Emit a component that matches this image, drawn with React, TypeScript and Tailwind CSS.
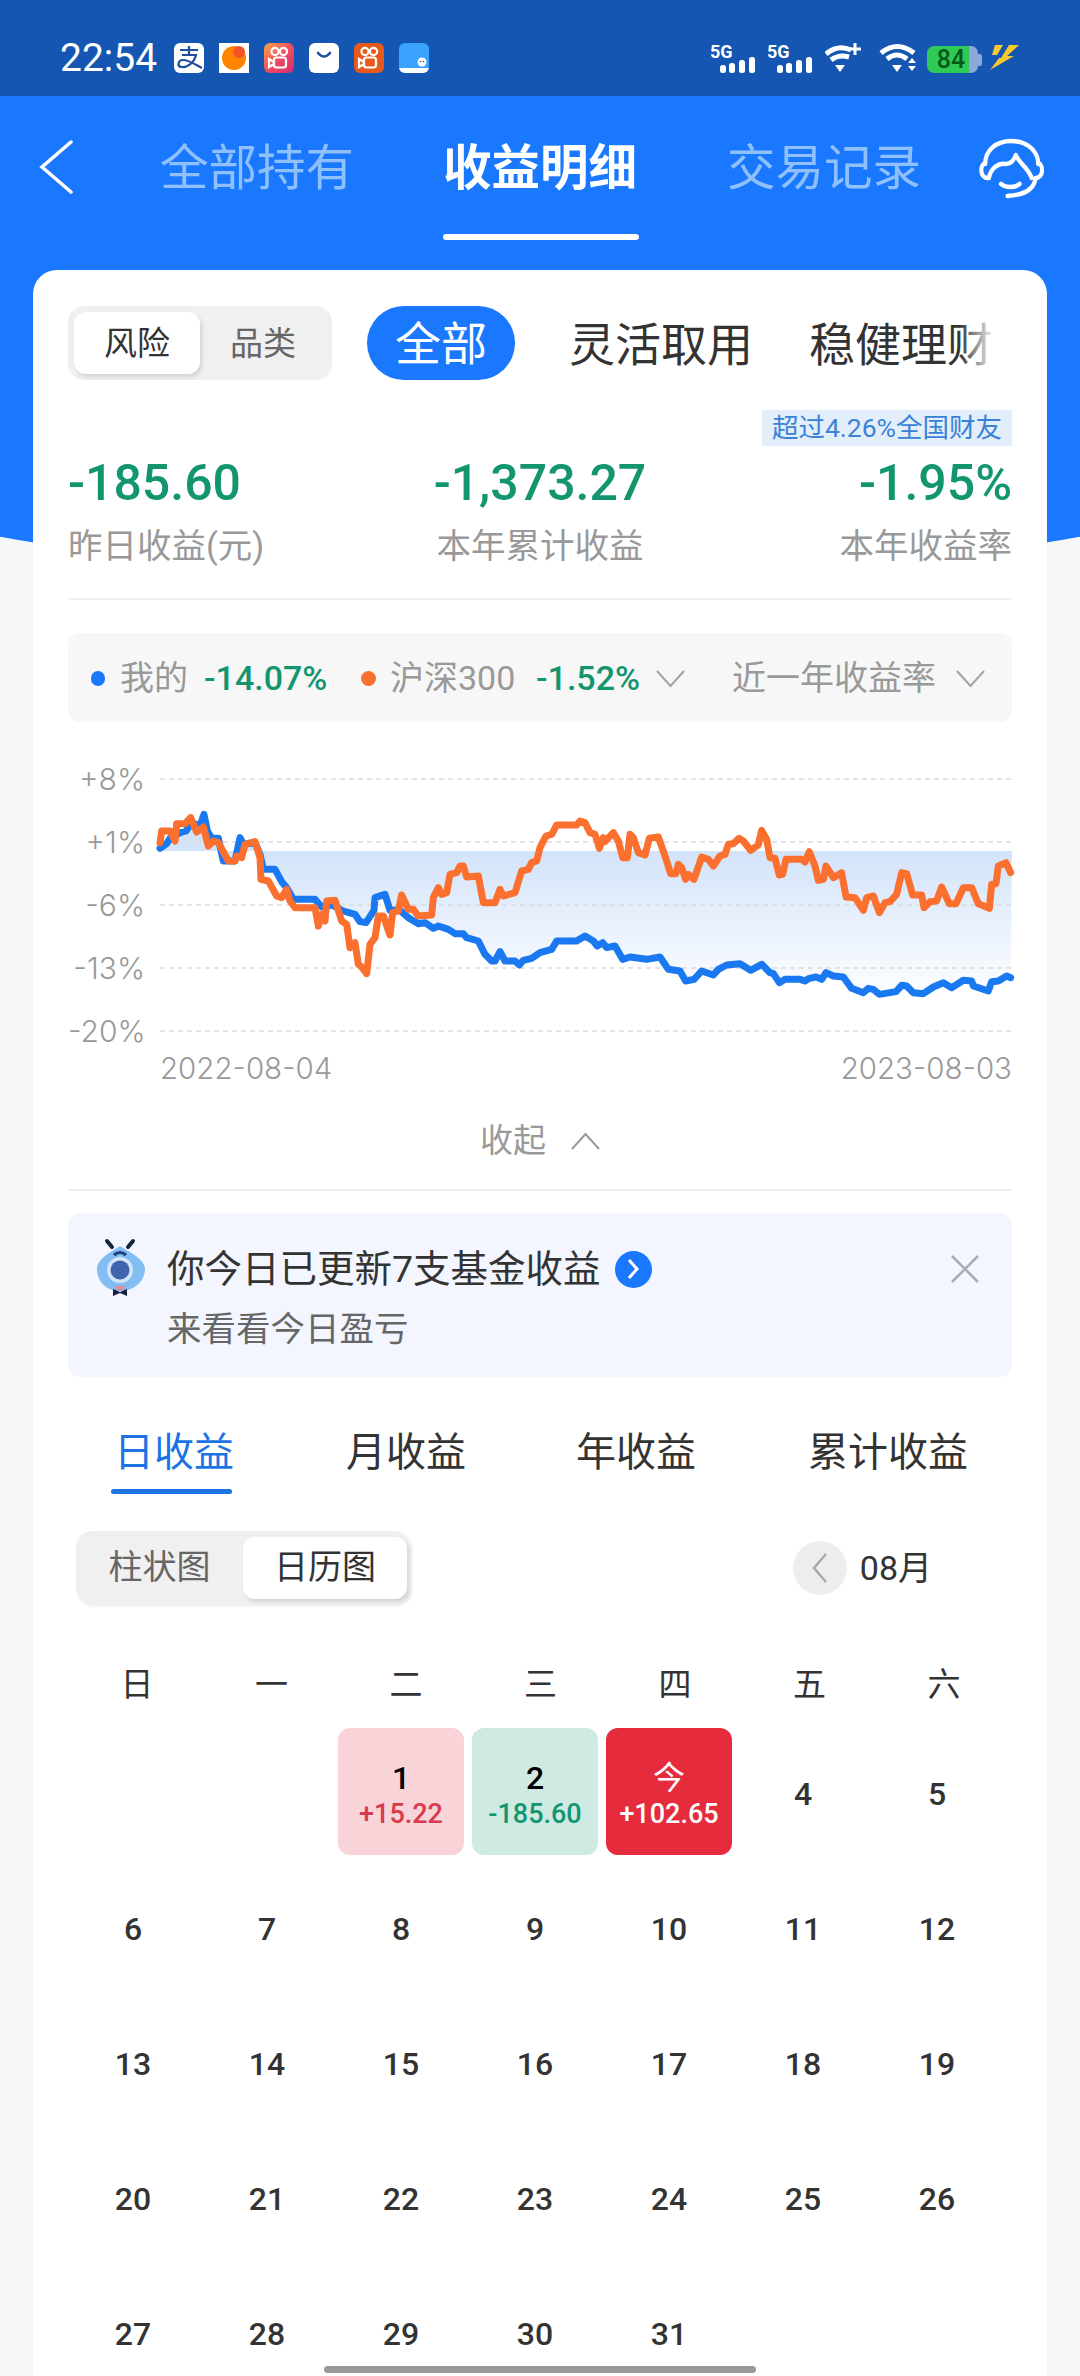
import React from 'react';

type Pt = [number, number];

const orangeA: Pt[] = [[300,275],[305,240],[330,240],[345,270],[350,218],[375,218],[392,200],[410,243],[430,228],[445,285],[460,270],[475,275],[505,330],[525,330],[530,315],[545,320],[555,280],[585,272],[600,320],[603,385],[625,390],[650,435],[665,440],[680,415],[690,450],[705,470],[765,470],[775,525],[785,490],[795,510],[800,450],[825,448],[845,510],[860,520],[870,590],[885,575],[895,640],[905,648],[920,668],[930,580],[945,560],[955,495],[970,495],[990,552],[998,485],[1015,480],[1025,432],[1045,475],[1060,475],[1075,495],[1115,492],[1120,440],[1135,410],[1145,430],[1160,425],[1170,370],[1190,365],[1200,345],[1210,345],[1220,378],[1255,375],[1270,455],[1305,455],[1320,415],[1330,435],[1365,425],[1385,360],[1405,355],[1415,335],[1430,330],[1440,290]];
const orangeB: Pt[] = [[18,255],[35,250],[50,222],[110,222],[120,210],[135,215],[150,245],[165,250],[178,292],[190,260],[195,272],[220,245],[235,270],[248,320],[262,320],[270,250],[280,260],[295,305],[315,312],[328,262],[355,258],[375,315],[392,368],[408,368],[415,340],[425,350],[437,385],[445,370],[462,385],[485,318],[505,325],[520,345],[540,315],[555,310],[565,280],[580,278],[597,262],[610,270],[632,298],[655,282],[665,238],[680,265],[690,320],[705,322],[718,372],[728,370],[738,325],[785,325],[795,333],[808,302],[825,345],[835,388],[850,385],[858,345],[880,380],[905,365],[918,438],[945,440],[970,478],[980,440],[1000,435],[1018,485],[1035,455],[1050,452],[1070,430],[1085,365],[1100,368],[1118,432],[1145,432],[1152,470],[1170,452],[1190,450],[1205,408],[1228,458],[1248,458],[1270,410],[1295,410],[1315,458],[1348,472],[1355,400],[1368,398],[1375,345],[1398,335],[1412,365]];
const blueA: Pt[] = [[300,292],[320,278],[330,262],[360,245],[378,240],[395,215],[420,225],[432,190],[442,240],[455,262],[475,262],[490,330],[525,330],[540,260],[550,280],[585,275],[600,310],[610,355],[645,355],[665,392],[680,410],[700,445],[765,445],[785,468],[815,462],[850,480],[885,490],[900,512],[918,515],[942,478],[945,440],[975,430],[990,478],[1020,478],[1045,500],[1075,518],[1095,515],[1120,532],[1135,525],[1165,535],[1185,548],[1210,548],[1220,560],[1255,570],[1275,610],[1295,630],[1305,630],[1320,602],[1335,630],[1365,630],[1378,642],[1390,628],[1415,622],[1440,605]];
const blueB: Pt[] = [[35,595],[50,570],[110,570],[135,555],[160,570],[172,585],[188,575],[200,590],[225,585],[248,625],[270,618],[320,625],[360,618],[385,655],[420,660],[437,690],[462,685],[485,660],[520,672],[535,655],[560,642],[600,638],[632,658],[665,640],[690,665],[700,668],[718,695],[735,685],[780,685],[795,690],[808,682],[828,678],[845,685],[858,665],[880,675],[910,678],[935,712],[970,725],[985,712],[1000,715],[1018,730],[1068,722],[1085,703],[1100,705],[1120,725],[1150,728],[1180,708],[1210,695],[1235,710],[1270,688],[1295,690],[1300,705],[1345,720],[1355,692],[1375,690],[1400,675],[1412,680]];

const toPoints = (a: Pt[], b: Pt[]) =>
  [...a.map(([x, y]) => `${60 + x / 3},${750 + y / 3}`), ...b.map(([x, y]) => `${540 + x / 3},${750 + y / 3}`)].join(' ');

const orangeLine = toPoints(orangeA, orangeB);
const blueLine = toPoints(blueA, blueB);

const Signal = ({ className }: { className?: string }) => (
  <div className={`relative w-[45px] h-[30px] ${className ?? ''}`}>
    <span className="block text-[18px] leading-[18px] font-bold text-white whitespace-nowrap">5G</span>
    <svg width="45" height="30" viewBox="0 0 45 30" className="absolute top-0 left-0">
      <rect x="10" y="22" width="6" height="8" rx="2.5" fill="#fff" />
      <rect x="19" y="20" width="6" height="10" rx="2.5" fill="#fff" />
      <rect x="29" y="17" width="6" height="13" rx="2.5" fill="#fff" />
      <rect x="39" y="14" width="6" height="16" rx="2.5" fill="#fff" />
    </svg>
  </div>
);

const Wifi = ({ plus, className }: { plus?: boolean; className?: string }) => (
  <svg width="37" height="29" viewBox="0 0 37 29" className={className}>
    <path d={plus ? 'M1 11 Q13 1 26 7' : 'M2 10 Q18 -3 35 10'} stroke="#fff" strokeWidth="5" fill="none" />
    <path d={plus ? 'M6 17 Q14 11 24 14' : 'M8 16 Q18 8 28 16'} stroke="#fff" strokeWidth="5" fill="none" />
    <path d={plus ? 'M10 22 L20 22 L15 29 Z' : 'M13 22 L23 22 L18 29 Z'} fill="#fff" />
    {plus ? (
      <path d="M30 0 V12 M24 6 H36" stroke="#fff" strokeWidth="3" />
    ) : (
      <path d="M33 15 L37 20 H29 Z M29 23 H37 L33 28 Z" fill="#fff" />
    )}
  </svg>
);

const KsIcon = ({ bg }: { bg: string }) => (
  <div className={`w-[30px] h-[30px] rounded-[6px] ${bg}`}>
    <svg width="30" height="30" viewBox="0 0 30 30" fill="none" stroke="#fff" strokeWidth="2.2">
      <circle cx="11" cy="8.5" r="3.6" />
      <circle cx="19.5" cy="8.5" r="3.6" />
      <rect x="10" y="14.5" width="12" height="10" rx="2.5" />
      <path d="M10 19 L5 16 V24 L10 21" />
    </svg>
  </div>
);

const NoticeMascot = () => (
  <svg width="80" height="80" viewBox="0 0 80 80" className="mt-[13px] shrink-0">
    <path d="M27 21 L22 15" stroke="#16233f" strokeWidth="4" strokeLinecap="round" />
    <path d="M43 21 L48 15" stroke="#16233f" strokeWidth="4" strokeLinecap="round" />
    <path d="M35 20 C44 26 60 33 60 43 C60 56 48 65 35 65 C22 65 12 56 12 43 C12 33 26 26 35 20 Z" fill="#82bdf4" />
    <path d="M29 29 Q35 24 41 29" stroke="#1d3f78" strokeWidth="3" fill="none" />
    <circle cx="35" cy="44" r="13" fill="#d5e6fb" />
    <circle cx="35" cy="44" r="9.5" fill="#3f64ad" />
    <path d="M30 60 H40 L38 64 H32 Z" fill="#e88a95" />
    <path d="M28 63 L35 66 L42 63 V70 L35 67 L28 70 Z" fill="#16233f" />
  </svg>
);

const Chevron = ({ up }: { up?: boolean }) => (
  <svg width="29" height="18" viewBox="0 0 29 18" fill="none" stroke={up ? '#999' : '#a3a3a3'} strokeWidth="2">
    <path d={up ? 'M1 17 L14.5 2 L28 17' : 'M1 1 L14.5 16 L28 1'} />
  </svg>
);

const weekdays = ['日', '一', '二', '三', '四', '五', '六'];
const days = Array.from({ length: 31 }, (_, i) => i + 1).filter(d => d > 3);

export default function App() {
  return (
    <div className="relative w-[1080px] h-[2376px] overflow-hidden bg-[#f6f7f8] font-[Roboto,'Noto_Sans_CJK_SC',sans-serif]">
      {/* blue curved backdrop behind the card */}
      <div className="absolute top-0 left-[-260px] w-[1600px] h-[578px] bg-[#1a78ff] rounded-b-[800px_157px]" />

      <div className="relative h-[96px] bg-[#1456b2] flex items-start pt-[43px] pl-[60px]">
        <span className="w-[114px] text-[39px] leading-[30px] text-white">22:54</span>
        <div className="flex gap-[15px]">
          <div className="w-[30px] h-[30px] rounded-[6px] bg-white">
            <svg width="30" height="30" viewBox="0 0 30 30" fill="none" stroke="#1f4e9c" strokeWidth="2.2">
              <path d="M6 7 H24 M15 3 V12 M8 12 H22 C20 20 13 25 7 24 C3 23 4 17 9 17 C15 17 22 22 28 25" />
            </svg>
          </div>
          <div className="w-[30px] h-[30px] bg-white">
            <svg width="30" height="30" viewBox="0 0 30 30">
              <circle cx="15" cy="15" r="12" fill="#ff8400" />
              <circle cx="20" cy="9" r="6" fill="#f4532a" />
            </svg>
          </div>
          <KsIcon bg="bg-gradient-to-br from-[#f7a13b] via-[#ee4d5f] to-[#d9266f]" />
          <div className="w-[30px] h-[30px] rounded-[6px] bg-white">
            <svg width="30" height="30" viewBox="0 0 30 30" fill="none" stroke="#1f4e9c" strokeWidth="2.6" strokeLinecap="round">
              <path d="M9 10 Q15 17 21 10" />
            </svg>
          </div>
          <KsIcon bg="bg-[#e85a1b]" />
          <div className="w-[30px] h-[30px] rounded-[6px] bg-[#3ba2fd] overflow-hidden">
            <svg width="30" height="30" viewBox="0 0 30 30">
              <rect x="0" y="25" width="30" height="5" fill="#fff" />
              <circle cx="23" cy="19" r="4.5" fill="#fff" />
              <circle cx="21.5" cy="18.5" r="0.8" fill="#1f4e9c" />
              <circle cx="24.5" cy="18.5" r="0.8" fill="#1f4e9c" />
            </svg>
          </div>
        </div>
        <div className="ml-[281px] flex items-start">
          <Signal />
          <Signal className="ml-[12px]" />
          <Wifi plus className="ml-[13px]" />
          <Wifi className="ml-[17px]" />
          <div className="ml-[11px] mt-[3px] flex items-center">
            <div className="w-[42px] h-[27px] rounded-l-[7px] bg-[#2fc956] flex items-center justify-center pl-[6px] text-[25px] font-medium text-[#07591a]">84</div>
            <div className="w-[9px] h-[27px] rounded-r-[7px] bg-[#8aa8d8]" />
            <div className="w-[4px] h-[12px] bg-[#8aa8d8] rounded-r-[2px]" />
          </div>
          <svg width="29" height="26" viewBox="0 0 29 26" className="ml-[8px] mt-[1px]">
            <path d="M5 1 H13 L7 11 H2 Z" fill="#f5c92f" />
            <path d="M19 1 H29 L17 12 H24 L0 26 L9 14 H11 Z" fill="#f5c92f" />
          </svg>
        </div>
      </div>

      <div className="relative h-[174px] flex items-start pt-[45px]">
        <svg width="36" height="54" viewBox="0 0 36 54" fill="none" stroke="#fff" strokeWidth="3.5" className="ml-[38px] mt-[-1px]">
          <path d="M33 2 L4 27 L33 52" strokeLinecap="round" />
        </svg>
        <span className="ml-[86px] w-[192px] text-[48.5px] leading-[56px] text-[#8fc0fc] whitespace-nowrap">全部持有</span>
        <div className="ml-[91px] w-[196px] flex flex-col">
          <span className="text-[48.5px] leading-[56px] font-bold text-white whitespace-nowrap">收益明细</span>
          <div className="mt-[37px] h-[6px] rounded-[3px] bg-white" />
        </div>
        <span className="ml-[88px] w-[192px] text-[48.5px] leading-[56px] text-[#8fc0fc] whitespace-nowrap">交易记录</span>
        <svg width="90" height="80" viewBox="0 0 90 80" fill="none" stroke="#fff" strokeWidth="4.5" strokeLinecap="round" strokeLinejoin="round" className="ml-[41px] mt-[-11px]">
          <g transform="translate(1 0) scale(0.93 1)">
            <path d="M26 34 C26 20 38 11 54 11 C70 11 83 20 83 34" />
            <path d="M26 33 C20 35 20 48 29 48" />
            <path d="M83 33 C89 35 89 48 80 48" />
            <path d="M30 48 C32 38 40 33 48 34 C53 34 57 30 59 25 C62 33 72 37 76 48" />
            <path d="M43 54 C48 58 58 58 63 54" />
            <path d="M80 49 C78 60 68 65 50 66" />
          </g>
        </svg>
      </div>

      <div className="relative mx-[33px] rounded-t-[24px] bg-white px-[35px] pt-[36px] h-[2106px]">
        <div className="flex items-start">
          <div className="w-[264px] h-[74px] rounded-[16px] bg-[#f0f0f0] flex items-center pl-[6px] shrink-0">
            <div className="w-[126px] h-[62px] rounded-[12px] bg-white shadow-[2px_3px_4px_rgba(0,0,0,0.12)] flex items-center justify-center pt-[2px] text-[33px] text-[#333]">风险</div>
            <div className="w-[126px] pt-[2px] text-center text-[33px] text-[#666]">品类</div>
          </div>
          <div className="ml-[35px] w-[148px] h-[74px] rounded-[37px] bg-[#1a78ff] flex items-center justify-center pt-[2px] text-[46px] text-white">全部</div>
          <span className="ml-[54px] pt-[2px] text-[46px] leading-[74px] text-[#333] whitespace-nowrap">灵活取用</span>
          <div className="relative ml-[56px]">
            <span className="block pt-[2px] text-[46px] leading-[74px] text-[#333] whitespace-nowrap">稳健理财</span>
            <div className="absolute top-0 right-[-2px] w-[36px] h-[76px] bg-gradient-to-r from-white/0 to-white" />
          </div>
        </div>

        <div className="mt-[28px] flex justify-end">
          <div className="h-[36px] w-[250px] bg-[#e3eefb] text-[26.5px] leading-[36px] text-[#3a82d6] text-center whitespace-nowrap">超过4.26%全国财友</div>
        </div>

        <div className="mt-[7px] grid grid-cols-3 text-[50px] leading-[60px] font-medium text-[#13956f]">
          <span>-185.60</span>
          <span className="text-center">-1,373.27</span>
          <span className="text-right">-1.95%</span>
        </div>
        <div className="mt-[10px] grid grid-cols-3 text-[34.5px] leading-[46px] text-[#999]">
          <span>昨日收益(元)</span>
          <span className="text-center">本年累计收益</span>
          <span className="text-right">本年收益率</span>
        </div>

        <div className="mt-[29px] h-[2px] bg-[#f0f0f0]" />

        <div className="mt-[33px] h-[89px] rounded-[12px] bg-[#f7f7f7] flex items-center pt-[2px] text-[34px] text-[#999] whitespace-nowrap">
          <div className="ml-[23px] w-[14px] h-[15px] rounded-full bg-[#1a78ff]" />
          <span className="ml-[15px] w-[68px]">我的</span>
          <span className="ml-[16px] w-[122px] font-medium text-[#13956f]">-14.07%</span>
          <div className="ml-[35px] w-[15px] h-[15px] rounded-full bg-[#f97032]" />
          <span className="ml-[14px] w-[130px]">沪深300</span>
          <span className="ml-[16px] w-[101px] font-medium text-[#13956f]">-1.52%</span>
          <span className="ml-[19px]"><Chevron /></span>
          <span className="ml-[47px] w-[205px]">近一年收益率</span>
          <span className="ml-[19px]"><Chevron /></span>
        </div>

        <div className="mt-[26px] flex items-start">
          <div className="w-[77px] shrink-0 text-right text-[30px] font-light text-[#999] font-[Inter,sans-serif]">
            {['+8%', '+1%', '-6%', '-13%', '-20%'].map(l => (
              <div key={l} className="h-[63px] leading-[63px] whitespace-nowrap">{l}</div>
            ))}
          </div>
          <div className="ml-[15px] w-[852px]">
            <svg width="860" height="302" viewBox="160 747 860 302" className="block overflow-visible">
              <defs>
                <linearGradient id="gain" gradientUnits="userSpaceOnUse" x1="0" y1="850" x2="0" y2="1000">
                  <stop offset="0" stopColor="#d3e3fa" />
                  <stop offset="1" stopColor="#ffffff" />
                </linearGradient>
              </defs>
              <polygon points={`${blueLine} 1012,850 160,850`} fill="url(#gain)" />
              {[778, 841, 904, 967, 1030].map(y => (
                <line key={y} x1="160" x2="1012" y1={y} y2={y} stroke="#dcdcdc" strokeWidth="1.5" strokeDasharray="5 4" />
              ))}
              <polyline points={blueLine} fill="none" stroke="#1a78f0" strokeWidth="7" strokeLinejoin="round" strokeLinecap="round" />
              <polyline points={orangeLine} fill="none" stroke="#fb6f2f" strokeWidth="7" strokeLinejoin="round" strokeLinecap="round" />
            </svg>
            <div className="flex justify-between text-[29.5px] leading-[36px] font-light text-[#999] font-[Inter,sans-serif]">
              <span>2022-08-04</span>
              <span>2023-08-03</span>
            </div>
          </div>
        </div>

        <div className="mt-[33px] h-[44px] flex items-center justify-center text-[33px] text-[#999]">
          <span className="mr-[4px]">收起</span>
          <span className="ml-[21px]"><Chevron up /></span>
        </div>

        <div className="mt-[26px] h-[2px] bg-[#f0f0f0]" />

        <div className="mt-[22px] h-[164px] rounded-[12px] bg-[#f3f6fe] flex items-start pl-[17px]">
          <NoticeMascot />
          <div className="ml-[2px] mt-[31px]">
            <div className="flex items-center">
              <span className="text-[37.5px] leading-[50px] text-[#333] whitespace-nowrap">你今日已更新7支基金收益</span>
              <div className="ml-[14px] w-[37px] h-[37px] rounded-full bg-[#1a78ff] flex items-center justify-center">
                <svg width="14" height="22" viewBox="0 0 14 22" fill="none" stroke="#fff" strokeWidth="3">
                  <path d="M3 2 L11 11 L3 20" />
                </svg>
              </div>
            </div>
            <div className="mt-[11px] text-[34.5px] leading-[48px] text-[#666]">来看看今日盈亏</div>
          </div>
          <svg width="30" height="30" viewBox="0 0 30 30" fill="none" stroke="#a8adb5" strokeWidth="2.5" className="ml-auto mr-[32px] mt-[41px]">
            <path d="M2 2 L28 28 M28 2 L2 28" />
          </svg>
        </div>

        <div className="mt-[48px] flex items-start pl-[46px] text-[40px] leading-[56px] text-[#333]">
          <div className="w-[232px] flex flex-col items-start">
            <span className="text-[#1c74e4]">日收益</span>
            <div className="mt-[8px] ml-[-3px] w-[121px] h-[5px] rounded-[3px] bg-[#1c74e4]" />
          </div>
          <span className="w-[230px]">月收益</span>
          <span className="w-[232px]">年收益</span>
          <span className="whitespace-nowrap">累计收益</span>
        </div>

        <div className="mt-[37px] flex items-center">
          <div className="ml-[8px] w-[334px] h-[73px] rounded-[16px] bg-[#f0f0f0] flex items-center pr-[3px] shadow-[2px_2px_3px_rgba(0,0,0,0.08)]">
            <div className="w-[167px] text-center text-[34px] text-[#666]">柱状图</div>
            <div className="w-[164px] h-[62px] rounded-[12px] bg-white shadow-[2px_3px_4px_rgba(0,0,0,0.12)] flex items-center justify-center text-[34px] text-[#333]">日历图</div>
          </div>
          <div className="ml-auto mr-[80px] flex items-center">
            <div className="w-[54px] h-[54px] rounded-full bg-[#eeeeee] flex items-center justify-center">
              <svg width="18" height="32" viewBox="0 0 18 32" fill="none" stroke="#aaa" strokeWidth="2.5">
                <path d="M15 2 L3 16 L15 30" />
              </svg>
            </div>
            <span className="ml-[13px] pt-[1px] text-[34px] text-[#333] whitespace-nowrap">08月</span>
          </div>
        </div>

        <div className="mt-[59px] ml-[6px] grid grid-cols-[repeat(7,126px)] gap-x-[8.5px] text-[33px] leading-[44px] text-[#333] text-center">
          {weekdays.map(d => <span key={d}>{d}</span>)}
        </div>

        <div className="mt-[21px] ml-[2px] grid grid-cols-[repeat(7,126px)] auto-rows-[127px] gap-[8px] text-[32px] leading-[38px] font-medium text-[#333] text-center">
          <div />
          <div />
          <div className="rounded-[12px] bg-[#f8d3d7] pt-[31px]">
            <div className="text-black">1</div>
            <div className="text-[27px] leading-[34px] text-[#d93a4d]">+15.22</div>
          </div>
          <div className="rounded-[12px] bg-[#cfeae2] pt-[31px]">
            <div className="text-black">2</div>
            <div className="text-[27px] leading-[34px] text-[#13956f]">-185.60</div>
          </div>
          <div className="rounded-[12px] bg-[#e62b3c] pt-[31px] text-white">
            <div className="font-normal">今</div>
            <div className="text-[27px] leading-[34px]">+102.65</div>
          </div>
          {days.map(d => (
            <div key={d} className="flex items-center justify-center pt-[4px]">{d}</div>
          ))}
        </div>
      </div>

      {/* gesture bar */}
      <div className="absolute left-[324px] top-[2366px] w-[432px] h-[7px] rounded-[4px] bg-[#999]" />
    </div>
  );
}
